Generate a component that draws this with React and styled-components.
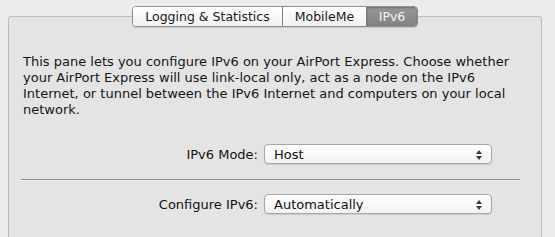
import React from 'react';
import styled, { createGlobalStyle } from 'styled-components';

const GlobalStyle = createGlobalStyle`
  html, body {
    margin: 0;
    padding: 0;
    background: #ececec;
  }
  body {
    font-family: "DejaVu Sans", "Lucida Grande", sans-serif;
    font-size: 13px;
    color: #111;
    overflow: hidden;
  }
`;

const Window = styled.div`
  width: 555px;
  height: 237px;
  padding: 6px 0 0 8px;
  box-sizing: border-box;
  overflow: hidden;
`;

const TabRow = styled.div`
  display: flex;
  justify-content: center;
  width: 534px;
  margin-bottom: -11px;
  position: relative;
  z-index: 1;
`;

const Segments = styled.div`
  display: flex;
  height: 21px;
  border: 1px solid #8e8e8e;
  border-radius: 4px;
  overflow: hidden;
  box-sizing: border-box;
  box-shadow: 0 1px 1px rgba(0, 0, 0, 0.12);
`;

const Segment = styled.div`
  display: flex;
  align-items: center;
  justify-content: center;
  width: ${p => p.w}px;
  font-size: 12.5px;
  color: ${p => (p.active ? '#f4f4f4' : '#1a1a1a')};
  background: ${p =>
    p.active
      ? 'linear-gradient(#969696, #838383)'
      : 'linear-gradient(#ffffff, #f1f1f1)'};
  box-shadow: ${p => (p.active ? 'inset 0 1px 2px rgba(0,0,0,0.25)' : 'none')};
  & + & {
    border-left: 1px solid ${p => (p.active ? '#7c7c7c' : '#c4c4c4')};
  }
`;

const Panel = styled.div`
  width: 534px;
  height: 240px;
  box-sizing: border-box;
  background: #e4e4e4;
  border: 1px solid #bdbdbd;
  border-bottom: none;
  border-radius: 3px 3px 0 0;
  padding: 37px 0 0 14px;
`;

const Intro = styled.p`
  margin: 0;
  width: 515px;
  line-height: 16px;
  white-space: nowrap;
  color: #151515;
`;

const Field = styled.div`
  display: flex;
  align-items: center;
  height: 20px;
  margin-top: ${p => p.top}px;
`;

const Label = styled.span`
  width: 241px;
  padding-right: 6px;
  box-sizing: border-box;
  text-align: right;
  color: #111;
`;

const Popup = styled.div`
  position: relative;
  display: flex;
  align-items: center;
  width: 228px;
  height: 20px;
  box-sizing: border-box;
  padding-left: 9px;
  border: 1px solid #a6a6a6;
  border-radius: 4px;
  background: linear-gradient(#ffffff, #f3f3f3);
  box-shadow: 0 1px 1px rgba(0, 0, 0, 0.1);
  color: #111;
`;

const Arrows = styled.svg`
  position: absolute;
  right: 9px;
  top: 5px;
`;

const Separator = styled.hr`
  width: 499px;
  margin: 15px 0 0 -2px;
  border: none;
  border-top: 1px solid #8c8c8c;
  border-bottom: 1px solid #ededed;
  height: 0;
`;

function UpDown() {
  return (
    <Arrows width="6" height="10" viewBox="0 0 6 10">
      <path d="M3 0 L6 4 L0 4 Z" fill="#3a3a3a" />
      <path d="M3 10 L6 6 L0 6 Z" fill="#3a3a3a" />
    </Arrows>
  );
}

export default function App() {
  return (
    <>
      <GlobalStyle />
      <Window>
        <TabRow>
          <Segments>
            <Segment w={149}>Logging &amp; Statistics</Segment>
            <Segment w={83}>MobileMe</Segment>
            <Segment w={50} active>IPv6</Segment>
          </Segments>
        </TabRow>
        <Panel>
          <Intro>
            This pane lets you configure IPv6 on your AirPort Express. Choose whether
            <br />
            your AirPort Express will use link-local only, act as a node on the IPv6
            <br />
            Internet, or tunnel between the IPv6 Internet and computers on your local
            <br />
            network.
          </Intro>
          <Field top={26}>
            <Label>IPv6 Mode:</Label>
            <Popup>
              Host
              <UpDown />
            </Popup>
          </Field>
          <Separator />
          <Field top={13}>
            <Label>Configure IPv6:</Label>
            <Popup>
              Automatically
              <UpDown />
            </Popup>
          </Field>
        </Panel>
      </Window>
    </>
  );
}
